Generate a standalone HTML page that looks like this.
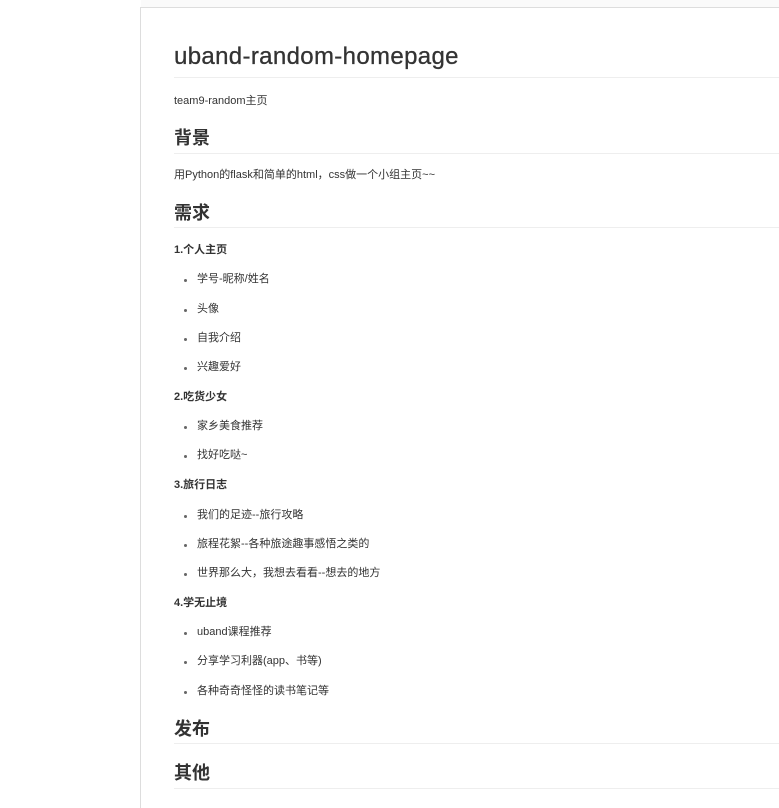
<!DOCTYPE html>
<html><head><meta charset="utf-8"><style>
body{margin:0;width:779px;height:800px;background:#fff;position:relative;overflow:hidden;font-family:"Liberation Sans","Noto Sans CJK SC",sans-serif;color:#333}
.top{position:absolute;left:141px;top:0;width:700px;height:7px;background:#fafafa}
.box{position:absolute;left:140px;top:7px;width:700px;height:800px;border-left:1px solid #ddd;border-top:1px solid #ddd}
.t{position:absolute;left:174px;white-space:nowrap;line-height:1}
.h1{font-size:24px;color:#333;letter-spacing:0.35px;-webkit-text-stroke:0.3px #333}
.h2{font-size:18px;font-weight:bold;color:#333}
.p{font-size:11px;color:#333}
.b{font-size:11px;font-weight:bold;color:#333}
.li{font-size:11px;color:#333;left:197px}
.li:before{content:"";position:absolute;left:-13px;top:5px;width:3px;height:3px;border-radius:50%;background:#666}
.hr{position:absolute;left:174px;width:605px;height:1px;background:#eee}
</style></head><body>
<div class="top"></div>
<div class="box"></div>
<div class="t h1" style="top:45px">uband-random-homepage</div><div class="hr" style="top:77px"></div>
<div class="t p" style="top:96px">team9-random主页</div>
<div class="t h2" style="top:129px">背景</div><div class="hr" style="top:153px"></div>
<div class="t p" style="top:170px">用Python的flask和简单的html，css做一个小组主页~~</div>
<div class="t h2" style="top:204px">需求</div><div class="hr" style="top:227px"></div>
<div class="t b" style="top:245px">1.个人主页</div>
<div class="t li" style="top:274px">学号-昵称/姓名</div>
<div class="t li" style="top:304px">头像</div>
<div class="t li" style="top:333px">自我介绍</div>
<div class="t li" style="top:362px">兴趣爱好</div>
<div class="t b" style="top:392px">2.吃货少女</div>
<div class="t li" style="top:421px">家乡美食推荐</div>
<div class="t li" style="top:450px">找好吃哒~</div>
<div class="t b" style="top:480px">3.旅行日志</div>
<div class="t li" style="top:510px">我们的足迹--旅行攻略</div>
<div class="t li" style="top:539px">旅程花絮--各种旅途趣事感悟之类的</div>
<div class="t li" style="top:568px">世界那么大，我想去看看--想去的地方</div>
<div class="t b" style="top:598px">4.学无止境</div>
<div class="t li" style="top:627px">uband课程推荐</div>
<div class="t li" style="top:656px">分享学习利器(app、书等)</div>
<div class="t li" style="top:686px">各种奇奇怪怪的读书笔记等</div>
<div class="t h2" style="top:720px">发布</div><div class="hr" style="top:743px"></div>
<div class="t h2" style="top:764px">其他</div><div class="hr" style="top:788px"></div>
</body></html>
